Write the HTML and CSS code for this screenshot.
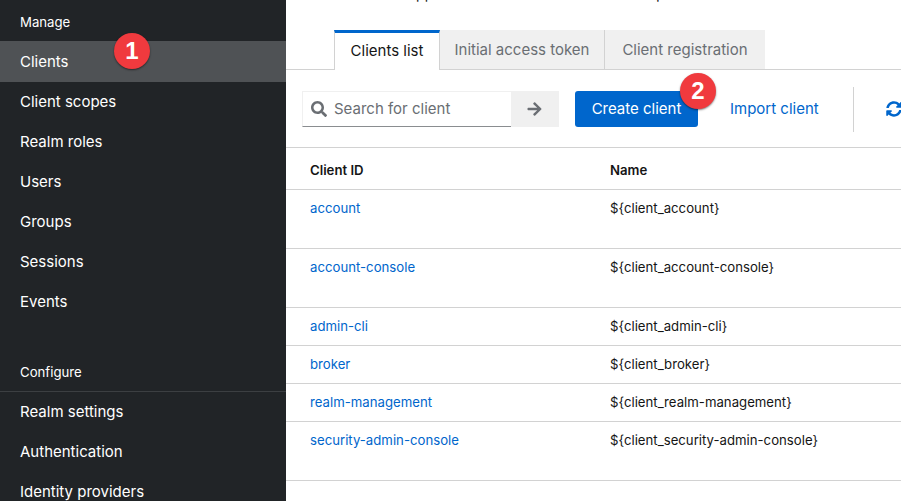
FILE: index.html
```html
<!DOCTYPE html>
<html>
<head>
    <meta charset="UTF-8">
    <link rel="stylesheet" href="styles.css">
</head>
<body>
    <div id="sidebar">
        <div class="nav-title">Manage</div>
        <a class="nav-item active">Clients</a>
        <a class="nav-item">Client scopes</a>
        <a class="nav-item">Realm roles</a>
        <a class="nav-item">Users</a>
        <a class="nav-item">Groups</a>
        <a class="nav-item">Sessions</a>
        <a class="nav-item">Events</a>
        <div class="nav-title nav-second">Configure</div>
        <a class="nav-item">Realm settings</a>
        <a class="nav-item">Authentication</a>
        <a class="nav-item">Identity providers</a>
    </div>

    <div id="content">
        <p class="intro">Clients are applications and services that can request authentication of a user.</p>

        <div class="tabs">
            <div class="tab current">Clients list</div>
            <div class="tab">Initial access token</div>
            <div class="tab">Client registration</div>
        </div>

        <div class="toolbar">
            <div class="search">
                <svg class="search-icon" viewBox="0 0 512 512" width="16" height="16"><path fill="#6a6e73" d="M505 442.700L405.300 343c-4.500-4.500-10.600-7-17-7H372c27.600-35.300 44-79.700 44-128C416 93.100 322.900 0 208 0S0 93.100 0 208s93.100 208 208 208c48.300 0 92.700-16.400 128-44v16.300c0 6.400 2.500 12.500 7 17l99.700 99.700c9.400 9.400 24.600 9.400 33.900 0l28.300-28.300c9.400-9.400 9.400-24.600.1-34zM208 336c-70.700 0-128-57.200-128-128 0-70.700 57.200-128 128-128 70.700 0 128 57.200 128 128 0 70.700-57.200 128-128 128z"/></svg>
                <span class="search-text">Search for client</span>
            </div>
            <div class="search-go">
                <svg class="go-icon" viewBox="0 0 448 512" width="15" height="16"><path fill="#6a6e73" d="M190.500 66.900l22.200-22.200c9.400-9.400 24.600-9.400 33.900 0L441 239c9.400 9.400 9.400 24.600 0 33.900L246.600 467.300c-9.400 9.400-24.600 9.400-33.900 0l-22.200-22.200c-9.500-9.500-9.300-25 .4-34.300L311.400 296H24c-13.300 0-24-10.700-24-24v-32c0-13.300 10.700-24 24-24h287.400L190.900 101.200c-9.800-9.300-10-24.800-.4-34.300z"/></svg>
            </div>
            <button class="btn-primary">Create client</button>
            <a class="btn-link">Import client</a>
            <div class="toolbar-sep"></div>
            <svg class="refresh" viewBox="0 0 512 512" width="16" height="16"><path fill="#06c" d="M370.720 133.280C339.458 104.008 298.888 87.962 255.848 88c-77.458.068-144.328 53.178-162.791 126.850-1.344 5.363-6.122 9.150-11.651 9.150H24.103c-7.498 0-13.194-6.807-11.807-14.176C33.933 94.924 134.813 8 256 8c66.448 0 126.791 26.136 171.315 68.685L463.030 40.970C478.149 25.851 504 36.559 504 57.941V192c0 13.255-10.745 24-24 24H345.941c-21.382 0-32.090-25.851-16.971-40.971l41.750-41.749zM32 296h134.059c21.382 0 32.090 25.851 16.971 40.971l-41.750 41.750c31.262 29.273 71.835 45.319 114.876 45.280 77.418-.070 144.315-53.144 162.787-126.849 1.344-5.363 6.122-9.150 11.651-9.150h57.304c7.498 0 13.194 6.807 11.807 14.176C478.067 417.076 377.187 504 256 504c-66.448 0-126.791-26.136-171.315-68.685L48.970 471.030C33.851 486.149 8 475.441 8 454.059V320c0-13.255 10.745-24 24-24z"/></svg>
        </div>

        <table class="clients">
            <tr class="head"><th>Client ID</th><th>Name</th></tr>
            <tr class="tall"><td><a>account</a></td><td>${client_account}</td></tr>
            <tr class="tall"><td><a>account-console</a></td><td>${client_account-console}</td></tr>
            <tr><td><a>admin-cli</a></td><td>${client_admin-cli}</td></tr>
            <tr><td><a>broker</a></td><td>${client_broker}</td></tr>
            <tr><td><a>realm-management</a></td><td>${client_realm-management}</td></tr>
            <tr class="tall"><td><a>security-admin-console</a></td><td>${client_security-admin-console}</td></tr>
        </table>
    </div>

    <div class="badge badge-one">1</div>
    <div class="badge badge-two">2</div>
</body>
</html>
```

FILE: styles.css
```css
html, body {
    height: 100%;
}
body {
    margin: 0;
    display: flex;
    overflow: hidden;
    font-family: Inter, "Liberation Sans", sans-serif;
    font-size: 14px;
    color: #151515;
    background: white;
}
#sidebar {
    width: 286px;
    flex-shrink: 0;
    height: 501px;
    overflow: hidden;
    background-color: #212427;
    color: white;
}
.nav-title {
    height: 41px;
    line-height: 44px;
    padding-left: 20px;
    font-size: 13.200px;
}
.nav-second {
    height: 50px;
    margin: 21px 0 -1px;
    line-height: 61px;
    box-sizing: border-box;
    border-bottom: 1px solid #3c3f42;
}
.nav-item {
    display: block;
    height: 40px;
    line-height: 41px;
    padding-left: 20px;
    font-size: 15px;
}
.nav-item.active {
    padding-bottom: 1px;
    margin-bottom: -1px;
    background-color: #4f5255;
}
#content {
    flex-grow: 1;
    min-width: 0;
}
.intro {
    margin: -18px 0 0 48px;
    height: 48px;
    line-height: 24px;
    white-space: nowrap;
}
.tabs {
    display: flex;
    height: 40px;
    box-sizing: border-box;
    padding-left: 48px;
    border-bottom: 1px solid #d2d2d2;
}
.tab {
    height: 39px;
    box-sizing: border-box;
    line-height: 40px;
    text-align: center;
    font-size: 15px;
    color: #6a6e73;
    background-color: #f0f0f0;
    border-right: 1px solid #d2d2d2;
    width: 165px;
}
.tab:last-child {
    width: 160px;
    border-right: none;
}
.tab.current {
    width: 106px;
    height: 40px;
    color: #151515;
    background-color: white;
    border-top: 3px solid #06c;
    border-left: 1px solid #d2d2d2;
    line-height: 35px;
}
.toolbar {
    display: flex;
    align-items: center;
    height: 78px;
    padding: 1px 0 0 16px;
    box-sizing: border-box;
    border-bottom: 1px solid #d2d2d2;
}
.toolbar > * {
    flex-shrink: 0;
}
.search {
    width: 209px;
    height: 36px;
    box-sizing: border-box;
    display: flex;
    align-items: center;
    gap: 7px;
    padding-left: 8px;
    font-size: 15px;
    color: #6a6e73;
    border: 1px solid #f0f0f0;
    border-bottom: 1px solid #8a8d90;
    border-right: none;
}
.search-icon {
    flex-shrink: 0;
}
.search-text {
    padding-bottom: 2px;
}
.search-go {
    width: 48px;
    height: 36px;
    display: flex;
    align-items: center;
    justify-content: center;
    background-color: #f0f0f0;
}
.go-icon {
    margin-right: 1px;
}
.btn-primary {
    width: 123px;
    height: 36px;
    margin-left: 16px;
    padding: 0 0 2px;
    border: none;
    border-radius: 3px;
    background-color: #06c;
    color: white;
    font-family: inherit;
    font-size: 15px;
}
.btn-link {
    margin: 0 0 2px 32px;
    width: 90px;
    font-size: 15px;
    color: #06c;
}
.toolbar-sep {
    width: 1px;
    height: 45px;
    margin-left: 33px;
    background-color: #d2d2d2;
}
.refresh {
    margin-left: 32px;
}
.clients {
    width: 100%;
    border-collapse: collapse;
    font-size: 13.200px;
}
.clients tr {
    height: 38px;
    border-bottom: 1px solid #d2d2d2;
}
.clients tr.head {
    height: 41px;
}
.clients tr.tall {
    height: 59px;
}
.clients th, .clients td {
    padding: 0 0 0 24px;
    text-align: left;
    vertical-align: middle;
}
.clients th {
    font-weight: 600;
    padding-top: 3px;
}
.clients th:first-child {
    width: 276px;
}
.clients tr.tall td {
    vertical-align: top;
    padding-top: 10px;
}
.clients a {
    color: #06c;
}
.badge {
    position: absolute;
    width: 36px;
    height: 36px;
    border-radius: 50%;
    background-color: #f03a3e;
    color: white;
    font-family: "Liberation Sans", sans-serif;
    font-size: 24px;
    font-weight: bold;
    line-height: 36px;
    text-align: center;
    box-shadow: 0 1px 2px rgba(0,0,0,0.5);
}
.badge-one {
    left: 114px;
    top: 33px;
}
.badge-two {
    left: 680px;
    top: 73px;
}
```
